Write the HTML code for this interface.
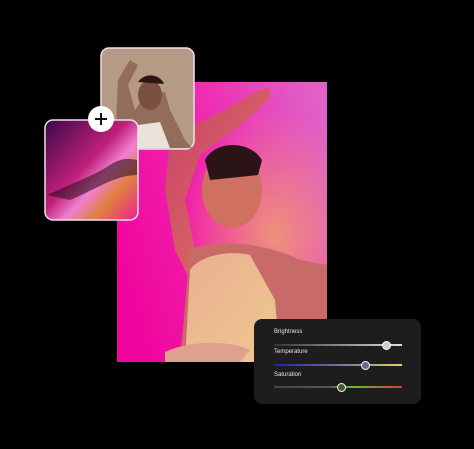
<!DOCTYPE html>
<html><head><style>
html,body{margin:0;padding:0;background:#000;width:474px;height:449px;overflow:hidden;font-family:"Liberation Sans",sans-serif}
.abs{position:absolute}
.lbl{position:absolute;color:#e8e8e8;font-size:6px;left:20px}
</style></head><body>
<svg class="abs" style="left:0;top:0" width="474" height="449" viewBox="0 0 474 449">
<defs>
<linearGradient id="bg" x1="0" y1="0.6" x2="1" y2="0.2">
<stop offset="0" stop-color="#f0069e"/><stop offset="0.5" stop-color="#f028b0"/><stop offset="1" stop-color="#e060c8"/></linearGradient>
<radialGradient id="rg" cx="0.75" cy="0.55" r="0.45"><stop offset="0" stop-color="#f0a070" stop-opacity="0.85"/><stop offset="1" stop-color="#f0a070" stop-opacity="0"/></radialGradient>
<linearGradient id="skin" x1="0" y1="0" x2="1" y2="1"><stop offset="0" stop-color="#c8406a"/><stop offset="1" stop-color="#e07860"/></linearGradient>
<linearGradient id="top" x1="0" y1="0" x2="1" y2="1"><stop offset="0" stop-color="#e8b090"/><stop offset="1" stop-color="#f0c890"/></linearGradient>
<linearGradient id="c2" x1="0" y1="0" x2="1" y2="1"><stop offset="0" stop-color="#3a0848"/><stop offset="0.45" stop-color="#c0207a"/><stop offset="0.6" stop-color="#f080d0"/><stop offset="0.75" stop-color="#e08040"/><stop offset="1" stop-color="#f02090"/></linearGradient>
<clipPath id="cm"><rect x="117" y="82" width="210" height="280"/></clipPath>
</defs>
<g clip-path="url(#cm)">
<rect x="117" y="82" width="210" height="280" fill="url(#bg)"/>
<rect x="117" y="82" width="210" height="280" fill="url(#rg)"/>
<path d="M170 140 C190 125 230 110 255 92 L270 88 L268 100 L240 125 L200 155 L185 200 L195 250 L190 280 L175 250 L165 190 Z" fill="url(#skin)"/>
<ellipse cx="232" cy="190" rx="30" ry="38" fill="#d07060"/>
<path d="M205 160 C215 140 250 140 262 160 L258 175 L210 180 Z" fill="#2a1418"/>
<path d="M190 250 C210 240 260 240 300 260 L327 265 L327 362 L180 362 Z" fill="#c86a68"/>
<path d="M190 270 C200 255 230 250 250 255 L275 300 L280 362 L185 362 Z" fill="url(#top)"/>
<path d="M165 352 C190 340 230 340 250 350 L240 362 L165 362 Z" fill="#e0a090"/>
</g>
<rect x="101" y="48" width="93" height="101" rx="8" fill="#b59a86" stroke="#f0e0ea" stroke-width="1.5"/>
<path d="M115 148 L118 80 L130 60 L138 65 L128 85 L135 110 L145 95 L165 92 L170 110 L185 140 L192 148 Z" fill="#8a6250" opacity="0.8"/>
<ellipse cx="150" cy="95" rx="12" ry="15" fill="#7a5040"/>
<path d="M138 82 C145 72 160 74 164 84 Z" fill="#2a1810"/>
<path d="M132 148 L138 125 L160 122 L170 148 Z" fill="#e8e2da"/>
<rect x="45" y="120" width="93" height="100" rx="8" fill="url(#c2)" stroke="#f0e0ea" stroke-width="1.5"/>
<path d="M47 195 C80 180 95 175 110 165 C120 158 130 158 137 160 L137 175 C115 175 95 190 70 200 Z" fill="#301020" opacity="0.6"/>
<circle cx="101" cy="119" r="13" fill="#fff"/>
<path d="M95 119 H107 M101 113 V125" stroke="#111" stroke-width="2"/>
</svg>
<div class="abs" style="left:254px;top:319px;width:167px;height:85px;background:#1d1d1d;border-radius:8px">
<div class="lbl" style="top:10px">Brightness</div>
<div class="lbl" style="top:30px">Temperature</div>
<div class="lbl" style="top:53px">Saturation</div>
<div class="abs" style="left:20px;top:25px;width:128px;height:2px;background:linear-gradient(90deg,#333,#ddd)"></div>
<div class="abs" style="left:128px;top:22px;width:7px;height:7px;border-radius:50%;background:#ccc;border:1px solid #fff"></div>
<div class="abs" style="left:20px;top:45px;width:128px;height:2px;background:linear-gradient(90deg,#2020b0,#7070a0 50%,#d8d860)"></div>
<div class="abs" style="left:107px;top:42px;width:7px;height:7px;border-radius:50%;background:#6a6a8a;border:1px solid #fff"></div>
<div class="abs" style="left:20px;top:67px;width:128px;height:2px;background:linear-gradient(90deg,#444,#556 45%,#60c040 60%,#d04030)"></div>
<div class="abs" style="left:83px;top:64px;width:7px;height:7px;border-radius:50%;background:#4a5a30;border:1px solid #fff"></div>
</div>
</body></html>
